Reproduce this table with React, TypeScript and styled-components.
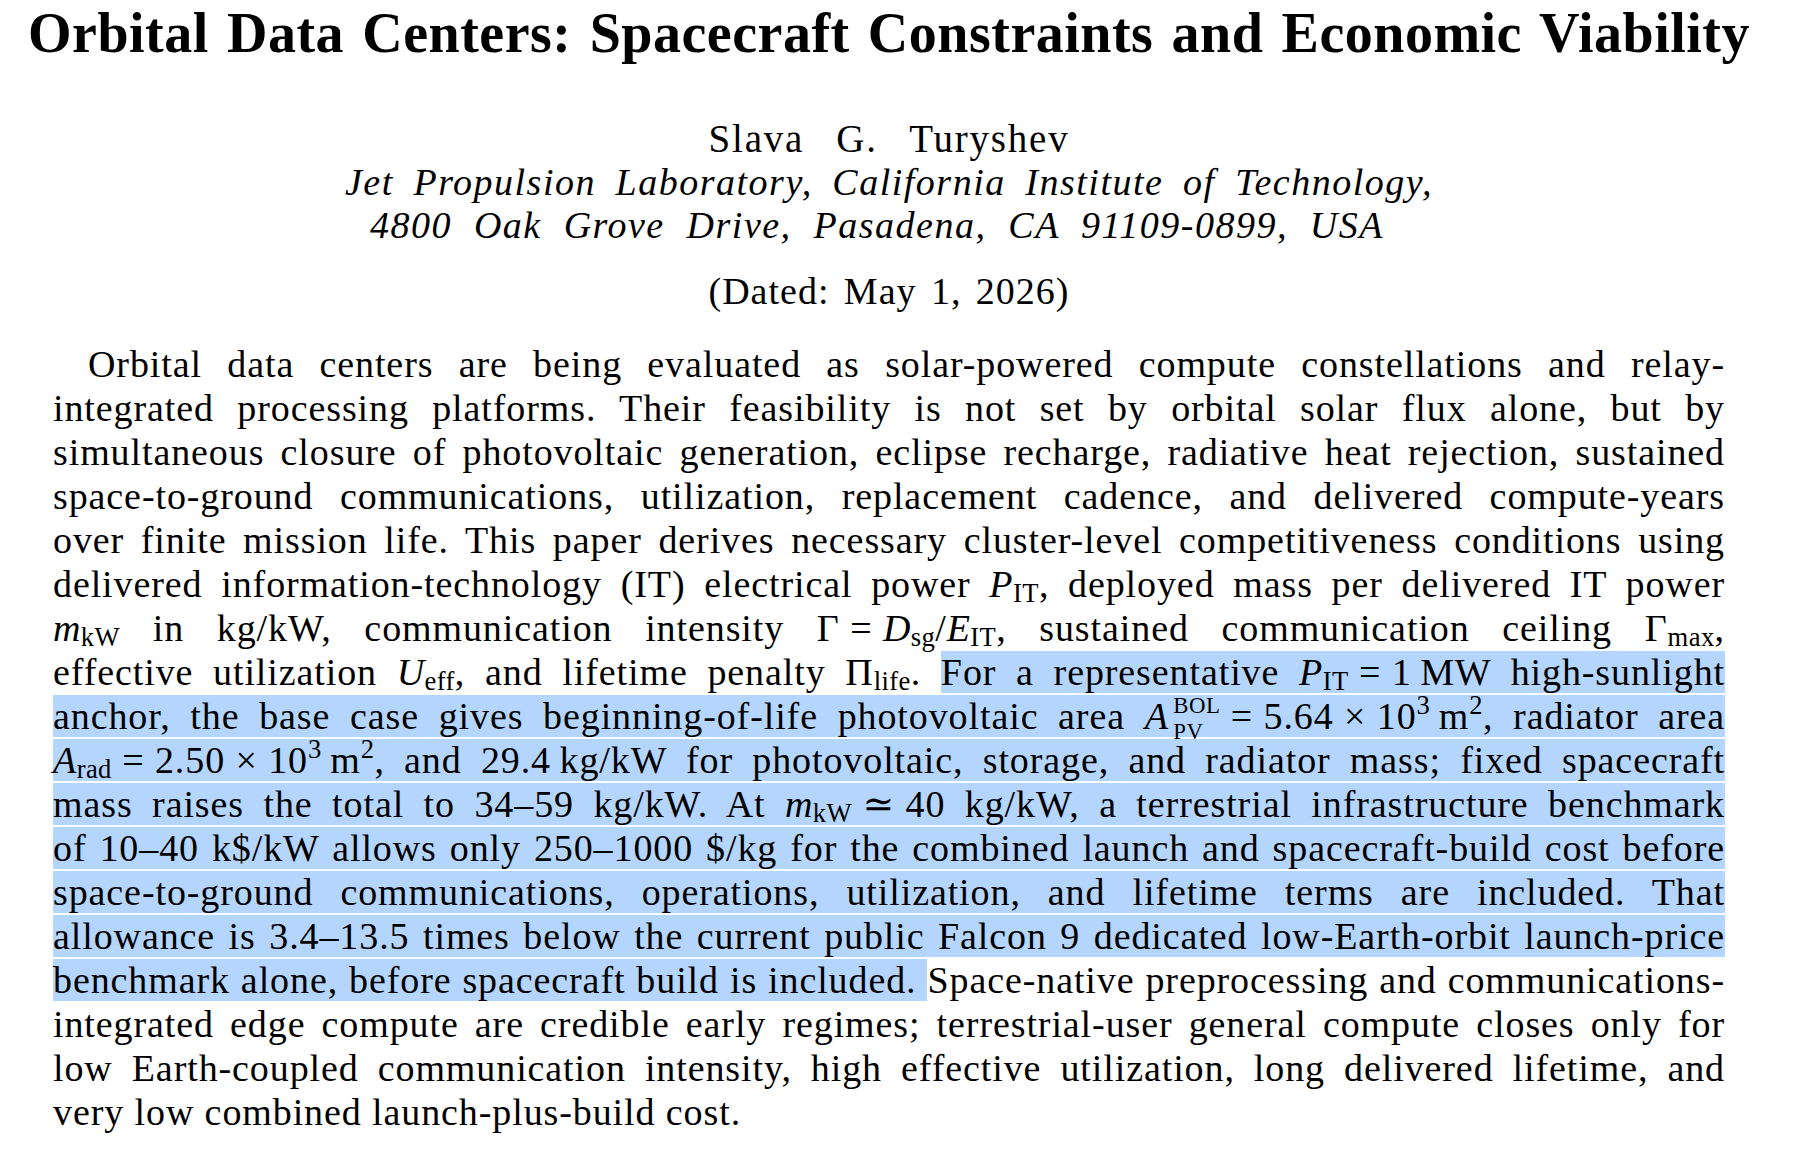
import React from "react";
import styled, { createGlobalStyle } from "styled-components";

const Global = createGlobalStyle`
  html, body { margin: 0; padding: 0; background: #ffffff; }
  body {
    font-family: "Liberation Serif", "DejaVu Serif", serif;
    color: #000000;
    -webkit-font-smoothing: antialiased;
  }
`;

const TH = "\u2005";
const THIN = "\u2009";

const Page = styled.main`
  box-sizing: border-box;
  width: 1798px;
  min-height: 1156px;
  padding: 2px 73px 0 53px;
  display: flex;
  flex-direction: column;
`;

const Header = styled.header`
  display: flex;
  flex-direction: column;
  align-items: center;
`;

const Spread = styled.div<{ $w: number; $pr?: number }>`
  flex: none;
  box-sizing: content-box;
  width: ${(p) => p.$w}px;
  padding-right: ${(p) => p.$pr ?? 0}px;
  text-align: justify;
  text-align-last: justify;
`;

const Title = styled(Spread)`
  font-size: 56px;
  font-weight: 700;
  line-height: 62px;
  letter-spacing: 0.5px;
`;

const Author = styled(Spread)`
  margin-top: 53px;
  font-size: 39px;
  line-height: 44px;
  letter-spacing: 1.8px;
`;

const Affiliation = styled(Spread)`
  font-size: 38px;
  line-height: 43px;
  font-style: italic;
  letter-spacing: 1.5px;
`;

const Dated = styled(Spread)`
  margin-top: 21.5px;
  font-size: 38px;
  line-height: 44px;
  letter-spacing: 1px;
`;

const Abstract = styled.section`
  margin-top: 29px;
  display: flex;
  flex-direction: column;
`;

const Line = styled.div<{ $indent?: boolean; $last?: boolean }>`
  height: 44px;
  font-size: 38px;
  line-height: 44px;
  letter-spacing: 0.9px;
  text-indent: ${(p) => (p.$indent ? "35px" : "0")};
  text-align: justify;
  text-align-last: ${(p) => (p.$last ? "left" : "justify")};
`;

const Mark = styled.span`
  background: #b4d5fe;
`;

const V = styled.i`
  font-style: italic;
  letter-spacing: 0.4px;
`;

const Sub = styled.sub`
  font-size: 0.7em;
  line-height: 0;
  vertical-align: -0.19em;
  letter-spacing: 0.4px;
`;

const Sup = styled.sup`
  font-size: 0.7em;
  line-height: 0;
  vertical-align: 0.58em;
  letter-spacing: 0.4px;
`;

const Stack = styled.span`
  display: inline-flex;
  flex-direction: column;
  align-items: flex-start;
  font-size: 0.6em;
  line-height: 25.5px;
  vertical-align: 15.5px;
  margin: -8px 0 -8px 5px;
  letter-spacing: 0.5px;
`;

const Script = styled.span`
  display: block;
  height: 25.5px;
`;

export default function App() {
  return (
    <>
      <Global />
      <Page>
        <Header>
          <Title $w={1722}>
            Orbital Data Centers: Spacecraft Constraints and Economic Viability
          </Title>
          <Author $w={361}>Slava G. Turyshev</Author>
          <Affiliation $w={1088}>
            Jet Propulsion Laboratory, California Institute of Technology,
          </Affiliation>
          <Affiliation $w={1014} $pr={24}>
            4800 Oak Grove Drive, Pasadena, CA 91109-0899, USA
          </Affiliation>
          <Dated $w={361}>(Dated: May 1, 2026)</Dated>
        </Header>
        <Abstract>
          <Line $indent>
            Orbital data centers are being evaluated as solar-powered compute constellations and relay-
          </Line>
          <Line>
            integrated processing platforms. Their feasibility is not set by orbital solar flux alone, but by
          </Line>
          <Line>
            simultaneous closure of photovoltaic generation, eclipse recharge, radiative heat rejection, sustained
          </Line>
          <Line>
            space-to-ground communications, utilization, replacement cadence, and delivered compute-years
          </Line>
          <Line>
            over finite mission life. This paper derives necessary cluster-level competitiveness conditions using
          </Line>
          <Line>
            delivered information-technology (IT) electrical power <V>P</V>
            <Sub>IT</Sub>, deployed mass per delivered IT power
          </Line>
          <Line>
            <V>m</V>
            <Sub>kW</Sub> in kg/kW, communication intensity Γ{TH}={TH}
            <V>D</V>
            <Sub>sg</Sub>/<V>E</V>
            <Sub>IT</Sub>, sustained communication ceiling Γ<Sub>max</Sub>,
          </Line>
          <Line>
            effective utilization <V>U</V>
            <Sub>eff</Sub>, and lifetime penalty Π<Sub>life</Sub>.{" "}
            <Mark>
              For a representative <V>P</V>
              <Sub>IT</Sub>
              {TH}={TH}1{THIN}MW high-sunlight
            </Mark>
          </Line>
          <Line>
            <Mark>
              anchor, the base case gives beginning-of-life photovoltaic area <V>A</V>
              <Stack>
                <Script>BOL</Script>
                <Script>PV</Script>
              </Stack>
              {TH}={TH}5.64{TH}×{TH}10<Sup>3</Sup>
              {THIN}m<Sup>2</Sup>, radiator area
            </Mark>
          </Line>
          <Line>
            <Mark>
              <V>A</V>
              <Sub>rad</Sub>
              {TH}={TH}2.50{TH}×{TH}10<Sup>3</Sup>
              {THIN}m<Sup>2</Sup>, and 29.4{THIN}kg/kW for photovoltaic, storage, and radiator mass; fixed spacecraft
            </Mark>
          </Line>
          <Line>
            <Mark>
              mass raises the total to 34–59 kg/kW. At <V>m</V>
              <Sub>kW</Sub>
              {TH}≃{TH}40 kg/kW, a terrestrial infrastructure benchmark
            </Mark>
          </Line>
          <Line>
            <Mark>
              of 10–40 k$/kW allows only 250–1000 $/kg for the combined launch and spacecraft-build cost before
            </Mark>
          </Line>
          <Line>
            <Mark>
              space-to-ground communications, operations, utilization, and lifetime terms are included. That
            </Mark>
          </Line>
          <Line>
            <Mark>
              allowance is 3.4–13.5 times below the current public Falcon 9 dedicated low-Earth-orbit launch-price
            </Mark>
          </Line>
          <Line>
            <Mark>benchmark alone, before spacecraft build is included. </Mark>
            Space-native preprocessing and communications-
          </Line>
          <Line>
            integrated edge compute are credible early regimes; terrestrial-user general compute closes only for
          </Line>
          <Line>
            low Earth-coupled communication intensity, high effective utilization, long delivered lifetime, and
          </Line>
          <Line $last>very low combined launch-plus-build cost.</Line>
        </Abstract>
      </Page>
    </>
  );
}
